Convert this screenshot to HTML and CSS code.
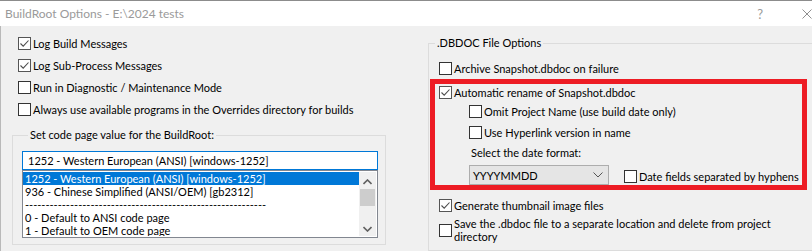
FILE: index.html
```html
<!DOCTYPE html>
<html lang="en">
<head>
  <meta charset="UTF-8">
  <title>BuildRoot Options</title>
  <link rel="stylesheet" href="styles.css">
</head>
<body>
  <div class="window">
    <div class="titlebar">
      <span class="title">BuildRoot Options - E:\2024 tests</span>
      <span class="help">?</span>
      <svg class="close" width="10" height="10" viewBox="0 0 10 10"><path d="M0.5 0.5 L9.5 9.5 M9.5 0.5 L0.5 9.5" stroke="#8f8f8f" stroke-width="1" fill="none"/></svg>
    </div>

    <div class="content">
      <div class="col-left">
        <label class="check"><span class="box checked"><svg viewBox="0 0 11 11"><path d="M1.5 5.5 L4.2 8.2 L9.5 2.5" /></svg></span>Log Build Messages</label>
        <label class="check"><span class="box checked"><svg viewBox="0 0 11 11"><path d="M1.5 5.5 L4.2 8.2 L9.5 2.5" /></svg></span>Log Sub-Process Messages</label>
        <label class="check"><span class="box"></span>Run in Diagnostic / Maintenance Mode</label>
        <label class="check"><span class="box"></span>Always use available programs in the Overrides directory for builds</label>

        <fieldset class="group codepage">
          <legend>Set code page value for the BuildRoot:</legend>
          <div class="edit">1252 - Western European (ANSI) [windows-1252]</div>
          <div class="listbox">
            <ul class="items">
              <li class="selected">1252 - Western European (ANSI) [windows-1252]</li>
              <li>936 - Chinese Simplified (ANSI/OEM) [gb2312]</li>
              <li>-----------------------------------------------------------</li>
              <li>0 - Default to ANSI code page</li>
              <li>1 - Default to OEM code page</li>
            </ul>
            <div class="scrollbar">
              <svg class="arrow" width="9" height="6" viewBox="0 0 9 6"><path d="M0.5 5 L4.5 1 L8.5 5" /></svg>
              <div class="thumb"></div>
              <svg class="arrow down" width="9" height="6" viewBox="0 0 9 6"><path d="M0.5 1 L4.5 5 L8.5 1" /></svg>
            </div>
          </div>
        </fieldset>
      </div>

      <fieldset class="group dbdoc">
        <legend>.DBDOC File Options</legend>
        <label class="check first"><span class="box"></span>Archive Snapshot.dbdoc on failure</label>

        <div class="highlight">
          <label class="check auto"><span class="box checked"><svg viewBox="0 0 11 11"><path d="M1.5 5.5 L4.2 8.2 L9.5 2.5" /></svg></span>Automatic rename of Snapshot.dbdoc</label>
          <div class="sub">
            <label class="check sub-row"><span class="box"></span>Omit Project Name (use build date only)</label>
            <label class="check sub-row"><span class="box"></span>Use Hyperlink version in name</label>
            <div class="caption">Select the date format:</div>
            <div class="format-row">
              <div class="dropdown">
                <span>YYYYMMDD</span>
                <svg width="10" height="6" viewBox="0 0 10 6"><path d="M0.5 0.5 L5 5 L9.5 0.5" /></svg>
              </div>
              <label class="check inline"><span class="box"></span>Date fields separated by hyphens</label>
            </div>
          </div>
        </div>

        <label class="check thumbs"><span class="box checked"><svg viewBox="0 0 11 11"><path d="M1.5 5.5 L4.2 8.2 L9.5 2.5" /></svg></span>Generate thumbnail image files</label>
        <label class="check multi"><span class="box"></span><span class="text">Save the .dbdoc file to a separate location and delete from project directory</span></label>
      </fieldset>
    </div>
  </div>
</body>
</html>
```

FILE: styles.css
```css
html, body {
  margin: 0;
  padding: 0;
  overflow: hidden;
}
body {
  font-family: Lato, "Noto Sans", sans-serif;
  font-size: 11px;
  color: #000;
  background: #f0f0f0;
}
.window {
  width: 812px;
  height: 251px;
  border-top: 1px solid #8c8c8c;
  box-sizing: border-box;
  overflow: hidden;
}
.titlebar {
  height: 25px;
  background: #fff;
  display: flex;
  align-items: center;
  padding-left: 5px;
  font-size: 12px;
}
.title {
  color: #9a9a9a;
  flex: 1;
}
.help {
  color: #9a9a9a;
  margin-right: 39px;
  font-size: 13px;
}
.close {
  flex: none;
}
.content {
  display: flex;
  height: 225px;
  border-left: 1px solid #b9b9b9;
  box-sizing: border-box;
}
.col-left {
  width: 414px;
  padding: 6px 0 0 11px;
  box-sizing: border-box;
  flex: none;
}

/* checkboxes */
.check {
  display: flex;
  align-items: center;
  height: 22px;
  white-space: nowrap;
}
.col-left > .check {
  margin-left: 6px;
}
.box {
  width: 13px;
  height: 13px;
  box-sizing: border-box;
  border: 1px solid #333;
  background: #fff;
  margin-right: 2px;
  flex: none;
  display: flex;
}
.box.checked {
  border-color: #555;
}
.box.checked svg {
  width: 11px;
  height: 11px;
  fill: none;
  stroke: #4d4d4d;
  stroke-width: 1.1;
}

/* group boxes */
.group {
  border: 1px solid #dcdcdc;
  margin: 0;
  padding: 0;
}
.group legend {
  padding: 0 2px;
  margin-left: 6px;
  line-height: 16px;
}
.codepage {
  width: 374px;
  box-sizing: border-box;
  margin-top: 7px;
  padding: 0 7px 6px 9px;
}
.edit {
  margin-top: 8px;
  height: 19px;
  border: 1px solid #0078d7;
  background: #fff;
  box-sizing: border-box;
  padding-left: 5px;
  line-height: 17px;
}
.listbox {
  height: 68px;
  border: 1px solid #828790;
  background: #fff;
  box-sizing: border-box;
  display: flex;
  padding: 1px 1px 1px 0;
}
.items {
  list-style: none;
  margin: 0;
  padding: 0;
  flex: 1;
  overflow: hidden;
}
.items li {
  height: 13px;
  line-height: 13px;
  padding-left: 2px;
  white-space: nowrap;
  overflow: hidden;
}
.items li.selected {
  background: #0078d7;
  color: #fff;
}
.scrollbar {
  width: 17px;
  background: #f0f0f0;
  display: flex;
  flex-direction: column;
  align-items: center;
  padding-top: 7px;
  box-sizing: border-box;
}
.scrollbar .arrow {
  fill: none;
  stroke: #606060;
  stroke-width: 1.6;
}
.scrollbar .thumb {
  width: 15px;
  height: 17px;
  background: #cdcdcd;
  margin: 4px 0 20px;
}

/* right group */
.dbdoc {
  width: 420px;
  flex: none;
  margin-left: 13px;
  margin-top: 9px;
  padding: 0;
}
.dbdoc > .check {
  margin-left: 10px;
}
.dbdoc > .check.first {
  margin-top: 6px;
}
.highlight {
  width: 377px;
  height: 111px;
  border: 5px solid #ed1c24;
  box-sizing: border-box;
  margin-left: 1px;
  padding-left: 4px;
}
.highlight .check.auto {
  height: 17px;
}
.sub {
  padding-left: 30px;
}
.sub .sub-row {
  height: 21px;
}
.caption {
  margin-top: 2px;
  line-height: 16px;
  padding-left: 2px;
}
.format-row {
  display: flex;
  align-items: center;
  margin-top: 3px;
}
.dropdown {
  width: 140px;
  height: 20px;
  box-sizing: border-box;
  border: 1px solid #adadad;
  background: #e5e5e5;
  display: flex;
  align-items: center;
  justify-content: space-between;
  padding: 0 5px 0 3px;
}
.dropdown svg {
  fill: none;
  stroke: #555;
  stroke-width: 1;
}
.check.inline {
  margin-left: 15px;
  height: 20px;
  margin-top: 2px;
}
.dbdoc > .check.thumbs {
  margin-top: 4px;
}
.dbdoc > .check.multi {
  margin-top: 1px;
  height: auto;
  white-space: normal;
}
.multi .text {
  width: 335px;
  line-height: 13px;
}
```
